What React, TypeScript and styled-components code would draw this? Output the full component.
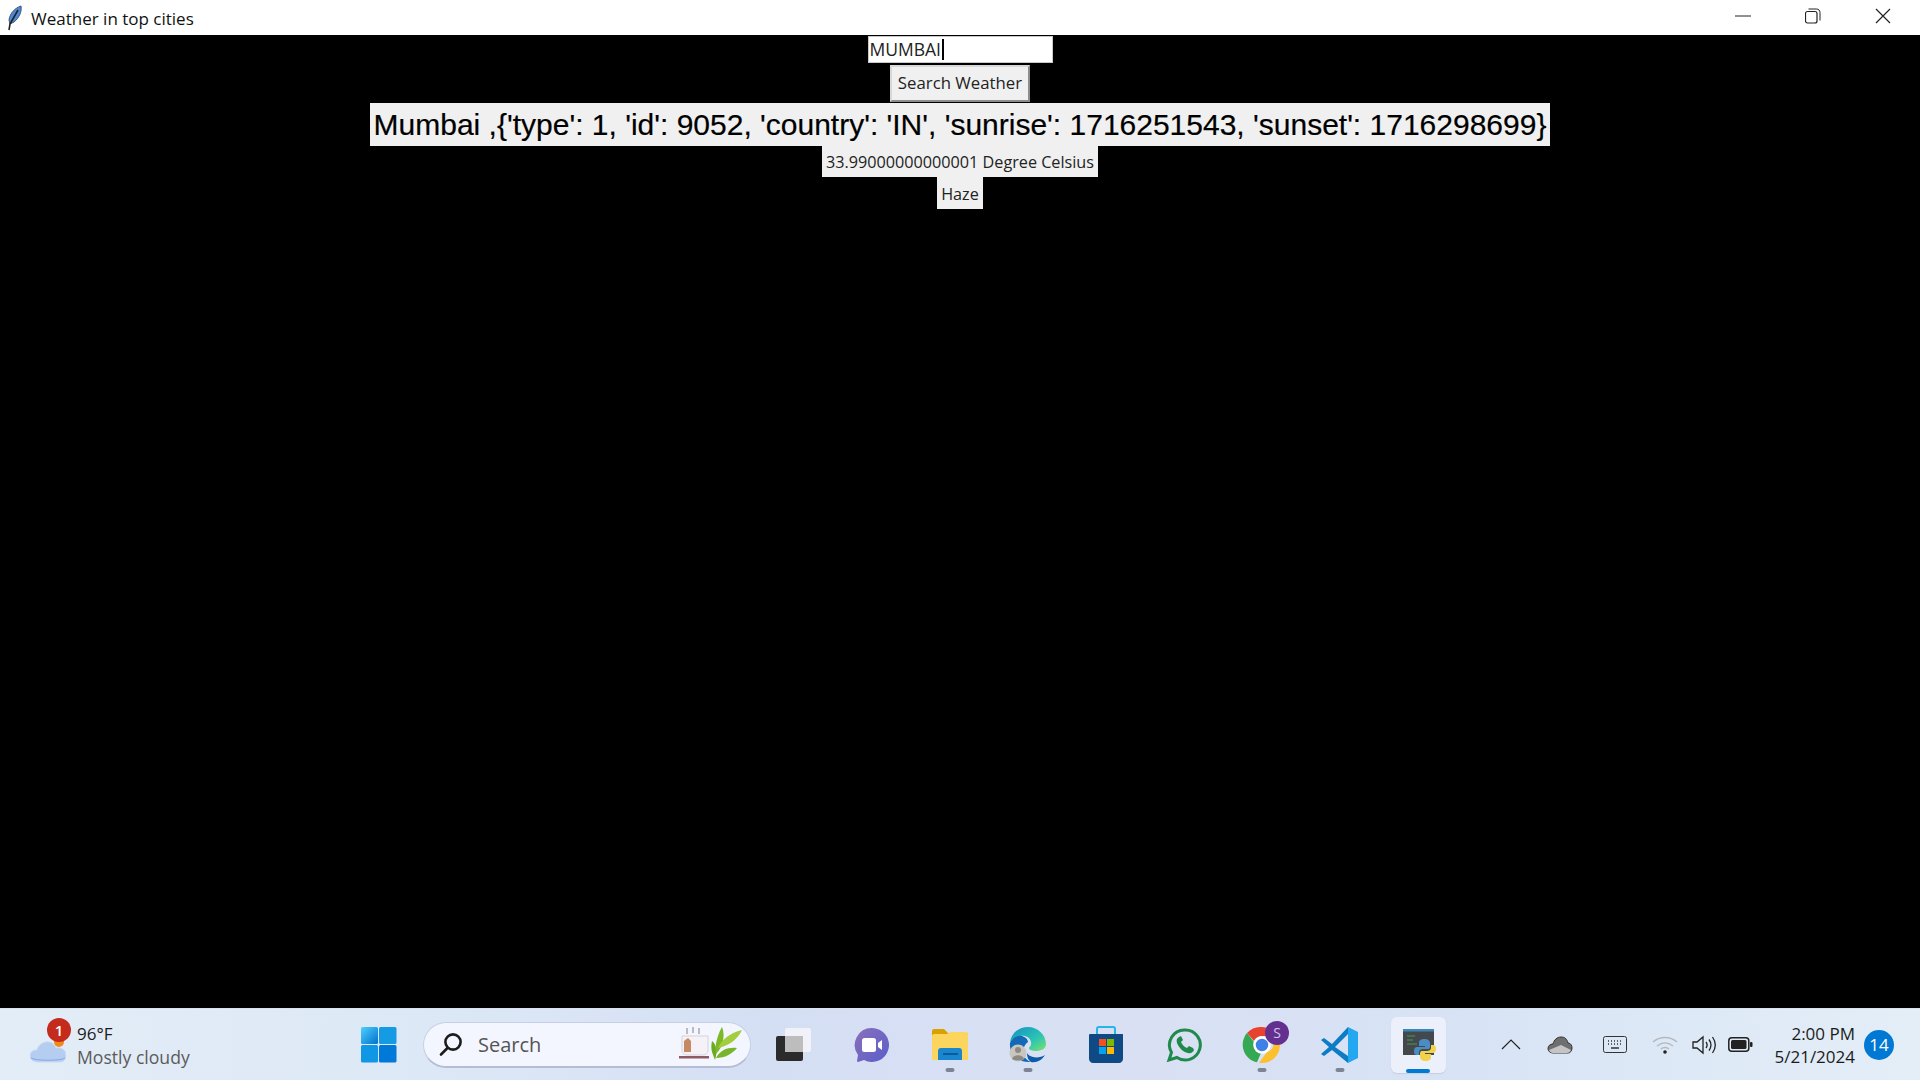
import styled, { createGlobalStyle } from "styled-components";

const GlobalStyle = createGlobalStyle`
    html, body {
        margin: 0;
        padding: 0;
        background: #000;
    }
    body {
        font-family: "Open Sans", "Noto Sans", sans-serif;
    }
`;

const Desktop = styled.div`
    width: 1920px;
    height: 1080px;
    display: flex;
    flex-direction: column;
    overflow: hidden;
`;

/* title bar */
const TitleBar = styled.header`
    height: 35px;
    flex: none;
    display: flex;
    align-items: center;
    background: #fff;
    padding-left: 6px;
`;
const TitleText = styled.span`
    margin-left: 8px;
    padding-top: 2px;
    font-size: 17px;
    color: #111;
`;
const WindowButtons = styled.div`
    margin-left: auto;
    display: flex;
    padding-right: 2px;
`;
const WindowButton = styled.div`
    width: 70px;
    height: 35px;
    display: flex;
    align-items: center;
    justify-content: center;
    padding-bottom: 3px;
    box-sizing: border-box;
`;

/* tkinter window */
const Client = styled.main`
    flex: 1;
    background: #000;
    display: flex;
    flex-direction: column;
    align-items: center;
    padding-top: 1px;
`;
const Entry = styled.div`
    width: 185px;
    height: 27px;
    box-sizing: border-box;
    background: #fff;
    border: 1px solid #c8c8c8;
    padding-left: 1px;
    font-size: 17.5px;
    line-height: 25px;
    color: #222;
    display: flex;
    align-items: center;
`;
const Caret = styled.span`
    width: 2px;
    height: 21px;
    margin-left: 1px;
    background: #000;
`;
const SearchButton = styled.div`
    width: 140px;
    height: 37px;
    margin: 2px 0 1px;
    padding-bottom: 2px;
    box-sizing: border-box;
    background: #f0f0f0;
    border: 2px solid #d8d8d8;
    border-right-color: #8c8c8c;
    border-bottom-color: #8c8c8c;
    font-size: 16.8px;
    color: #222;
    display: flex;
    align-items: center;
    justify-content: center;
`;
const BigLabel = styled.div`
    background: #f0f0f0;
    color: #000;
    font-family: "Liberation Sans", Arial, sans-serif;
    font-size: 30px;
    -webkit-text-stroke: 0.2px #000;
    height: 43px;
    padding: 0 4px;
    display: flex;
    align-items: center;
    white-space: nowrap;
`;
const Label = styled.div<{ $h: number }>`
    background: #f0f0f0;
    color: #222;
    font-size: 16.2px;
    height: ${(p) => p.$h}px;
    padding: 0 4px;
    display: flex;
    align-items: center;
    white-space: nowrap;
`;
const HazeLabel = styled(Label)`
    padding-top: 2px;
    box-sizing: border-box;
`;

/* taskbar */
const Taskbar = styled.footer`
    height: 72px;
    flex: none;
    display: flex;
    align-items: center;
    background: linear-gradient(90deg, #e3edf7 0%, #dde8f6 22%, #d5dff4 40%, #d9e0f3 60%, #d7e3f5 75%, #e3eef7 100%);
    border-top: 1px solid #d8e2ee;
    box-sizing: border-box;
`;
const WeatherWidget = styled.div`
    width: 340px;
    flex: none;
    display: flex;
    align-items: center;
    padding-left: 30px;
    box-sizing: border-box;
    position: relative;
`;
const WeatherBadge = styled.span`
    position: absolute;
    left: 47px;
    top: -2px;
    width: 24px;
    height: 24px;
    border-radius: 50%;
    background: #c42b1c;
    color: #fff;
    font-size: 15px;
    font-weight: 600;
    display: flex;
    align-items: center;
    justify-content: center;
`;
const WeatherText = styled.div`
    margin-left: 11px;
    padding-top: 2px;
    display: flex;
    flex-direction: column;
    gap: 1px;
`;
const WeatherTemp = styled.span`
    font-size: 17px;
    line-height: 23px;
    color: #1b1b1b;
`;
const WeatherSub = styled.span`
    font-size: 17.6px;
    line-height: 23px;
    color: #5b5b5b;
`;
const Slot = styled.div<{ $active?: boolean }>`
    width: 78px;
    height: 56px;
    flex: none;
    display: flex;
    align-items: center;
    justify-content: center;
    position: relative;
    &::before {
        content: "";
        display: ${(p) => (p.$active ? "block" : "none")};
        position: absolute;
        left: 12px;
        right: 11px;
        top: 0;
        bottom: 0;
        border-radius: 6px;
        background: #ebf0fa;
        box-shadow: 0 1px 1px #c5cede;
    }
    & > svg {
        position: relative;
    }
`;
const RunDot = styled.span<{ $active?: boolean }>`
    position: absolute;
    left: 50%;
    bottom: ${(p) => (p.$active ? "0" : "1px")};
    width: ${(p) => (p.$active ? "24px" : "9px")};
    height: 4px;
    transform: translateX(-50%);
    border-radius: 2px;
    background: ${(p) => (p.$active ? "#0078d4" : "#7d8595")};
`;
const SearchPill = styled.div`
    width: 328px;
    height: 46px;
    flex: none;
    margin: 0 4px 0 5px;
    box-sizing: border-box;
    border-radius: 23px;
    background: #f3f6fe;
    border: 1px solid #c6d0e4;
    border-bottom: 2px solid #b4bdd3;
    display: flex;
    align-items: center;
    padding: 0 3px 0 15px;
`;
const SearchText = styled.span`
    margin-left: 15px;
    font-size: 20px;
    color: #555;
`;
const SearchArt = styled.div`
    margin-left: auto;
    display: flex;
`;
const Tray = styled.div`
    margin-left: auto;
    display: flex;
    align-items: center;
    padding-right: 26px;
`;
const TrayIcon = styled.div<{ $w: number }>`
    width: ${(p) => p.$w}px;
    display: flex;
    align-items: center;
    justify-content: center;
`;
const Clock = styled.div`
    width: 97px;
    text-align: right;
    font-size: 17px;
    line-height: 23px;
    color: #1b1b1b;
    white-space: nowrap;
`;
const CountBadge = styled.div`
    width: 30px;
    height: 30px;
    margin-left: 9px;
    border-radius: 50%;
    background: #0078d4;
    color: #fff;
    font-size: 17px;
    display: flex;
    align-items: center;
    justify-content: center;
`;

const Feather = () => (
    <svg width="17" height="26" viewBox="0 0 17 26">
        <path d="M15 1C9 3 4 8 3 15l1 4 4-2c5-4 8-10 7-16z" fill="#5088d6" stroke="#3c5878" strokeWidth="1" />
        <path d="M12 5L4 19 3 25" fill="none" stroke="#222" strokeWidth="1.6" />
    </svg>
);

const CloudWeather = () => (
    <svg width="36" height="36" viewBox="0 0 36 36">
        <circle cx="29" cy="15" r="5" fill="#f08a1d" />
        <path d="M8 35C3 35 0 32 0 28.500 0 25 3 23 7 23c1-5 7-9 12-8 4 .5 6 4 7 6 5-1 10 2 10 7 0 4-2 7-6 7z" fill="#b4cdf0" stroke="#c9dbf4" />
        <path d="M1 31c4 3 30 3 34 0" fill="none" stroke="#86aadc" strokeWidth="1" />
    </svg>
);

const WindowsLogo = () => (
    <svg width="36" height="36" viewBox="0 0 36 36">
        <defs>
            <linearGradient id="win" x1="0" y1="0" x2="1" y2="1">
                <stop offset="0" stopColor="#4fd0fb" />
                <stop offset="1" stopColor="#0072cf" />
            </linearGradient>
        </defs>
        <rect width="17" height="17" rx="1.5" fill="url(#win)" />
        <rect x="18" width="17.5" height="17" rx="1.5" fill="#149be3" />
        <rect y="18" width="17" height="17.5" rx="1.5" fill="#0f96e4" />
        <rect x="18" y="18" width="17.5" height="17.5" rx="1.5" fill="#0079d8" />
    </svg>
);

const SearchGlass = () => (
    <svg width="24" height="25" viewBox="0 0 24 25" fill="none" stroke="#1c1c1c" strokeWidth="2.6" strokeLinecap="round">
        <circle cx="14" cy="10" r="7.6" />
        <path d="M8.5 16L2 22.5" />
    </svg>
);

const TeaArt = () => (
    <svg width="68" height="36" viewBox="0 0 68 36">
        <path d="M8 2v6M14 1v6M20 2v6" stroke="#a4a4a4" strokeWidth="1.4" fill="none" />
        <path d="M3 10h26v14c0 4-3 5-6 5H9c-3 0-6-1-6-5z" fill="#f4f2f6" stroke="#d6d2dc" />
        <path d="M5 15l4-3 3 3v11H5z" fill="#c58a63" />
        <rect y="30" width="30" height="2.500" fill="#8e5a64" />
        <path d="M36 34C34 28 31 24 33 15c4 3 6 10 3 19z" fill="#6bab1e" />
        <path d="M37 28C35 20 39 8 43 1c3 7 2 19-6 27z" fill="#7cb828" />
        <path d="M39 22c4-9 12-15 24-18-4 9-13 16-24 18z" fill="#a2cd3c" />
        <path d="M37 32c4-8 12-11 21-10-5 6-12 10-21 10z" fill="#79b52a" />
    </svg>
);

const TaskView = () => (
    <svg width="36" height="36" viewBox="0 0 36 36">
        <rect x="0" y="9" width="27" height="25" rx="2" fill="#2b2b2b" />
        <rect x="9" y="1" width="26" height="24" rx="2" fill="#f7f7f8" opacity="0.82" />
        <rect x="9" y="9" width="18" height="16" fill="#bdbdbd" />
    </svg>
);

const MeetIcon = () => (
    <svg width="36" height="36" viewBox="0 0 36 36">
        <defs>
            <linearGradient id="meet" x1="0" y1="0" x2="1" y2="1">
                <stop offset="0" stopColor="#8a6fbb" />
                <stop offset="1" stopColor="#5a5fca" />
            </linearGradient>
        </defs>
        <path d="M18 1a17 17 0 1 1-8 32l-6 2c-1 0-1-1-1-1l1-6A17 17 0 0 1 18 1z" fill="url(#meet)" />
        <rect x="8" y="11" width="14" height="14" rx="2.5" fill="#fff" />
        <path d="M24 16l4-3v10l-4-3z" fill="#fff" />
    </svg>
);

const FolderIcon = () => (
    <svg width="36" height="34" viewBox="0 0 36 34">
        <path d="M0 3c0-1 1-2 2-2h10l4 4h20v5H0z" fill="#d9a100" />
        <path d="M0 8c0-1 1-2 2-2h13l3-2h16c1 0 2 1 2 2v26H0z" fill="#fcd55f" />
        <path d="M6 32v-9c0-2 1-3 3-3h18c2 0 3 1 3 3v9z" fill="#1a86d0" />
        <rect x="11" y="25" width="15" height="2" fill="#0d5b9b" />
    </svg>
);

const EdgeIcon = () => (
    <svg width="38" height="38" viewBox="0 0 38 38">
        <defs>
            <linearGradient id="edge" x1="0" y1="0" x2="1" y2="1">
                <stop offset="0" stopColor="#1291c4" />
                <stop offset="0.6" stopColor="#2cc4b4" />
                <stop offset="1" stopColor="#7ee36a" />
            </linearGradient>
        </defs>
        <path d="M1 17C2 7 10 1 19 1c10 0 18 8 18 17 0 5-5 7-10 7-4 0-7-1-7-3 0-1 3-2 2-6-1-5-6-7-11-6C6 11 2 14 1 17z" fill="url(#edge)" />
        <path d="M1 17c2-5 7-8 12-7 3 1 6 3 6 6-3 2-5 6-5 10 0 4 3 8 8 10C10 37 0 29 1 17z" fill="#1369b5" />
        <path d="M22 36c6 1 11-2 14-7-3 2-8 3-12 2-3-1-5-2-6-4 0 4 1 7 4 9z" fill="#0f5aa6" />
        <circle cx="9" cy="27" r="8.5" fill="#c9c6c0" />
        <circle cx="9" cy="24" r="3" fill="#8d8a85" />
        <path d="M3 33c1-5 11-5 12 0-3 2-9 2-12 0z" fill="#8d8a85" />
    </svg>
);

const StoreIcon = () => (
    <svg width="36" height="38" viewBox="0 0 36 38">
        <path d="M9 8V3c0-1 1-2 2-2h14c1 0 2 1 2 2v5" fill="none" stroke="#27b4e8" strokeWidth="2" />
        <path d="M1 9c0-1 1-1 1-1h32c1 0 1 0 1 1v24c0 2-2 4-4 4H5c-2 0-4-2-4-4z" fill="#0f4a85" />
        <rect x="11" y="13" width="7" height="7" fill="#f25022" />
        <rect x="19" y="13" width="7" height="7" fill="#7fba00" />
        <rect x="11" y="21" width="7" height="7" fill="#00a4ef" />
        <rect x="19" y="21" width="7" height="7" fill="#ffb900" />
    </svg>
);

const WhatsAppIcon = () => (
    <svg width="36" height="36" viewBox="0 0 36 36">
        <path d="M19 3a15 15 0 1 1-8 27.5L3 33l2.5-7.5A15 15 0 0 1 19 3z" fill="none" stroke="#1f8a4c" strokeWidth="3" />
        <path d="M13 10c-2 1-3 3-2 6 2 5 6 9 11 10 3 1 5-1 6-3l-1-2-4-2-2 2c-3-1-5-4-6-6l2-2-2-4z" fill="#1f8a4c" />
    </svg>
);

const ChromeIcon = () => (
    <svg width="60" height="50" viewBox="0 0 60 50">
        <g transform="translate(12 7)">
            <path d="M18 0a18 18 0 0 1 15.6 9H18a9 9 0 0 0-8 5L3 6A18 18 0 0 1 18 0z" fill="#e8432f" />
            <path d="M3 6l7 9a9 9 0 0 0 7 11l-4 9.300A18 18 0 0 1 3 6z" fill="#34a853" />
            <path d="M33.600 9A18 18 0 0 1 15 35.800L23 25a9 9 0 0 0 3-16z" fill="#fbc02d" />
            <circle cx="18" cy="18" r="7.500" fill="#3f7fe8" stroke="#fff" strokeWidth="2.500" />
        </g>
        <circle cx="45" cy="13" r="12" fill="#63308f" />
        <text x="45" y="18" textAnchor="middle" fontSize="14" fontFamily="Open Sans, sans-serif" fill="#d6c2e8">S</text>
    </svg>
);

const VsCodeIcon = () => (
    <svg width="38" height="38" viewBox="0 0 38 38">
        <path d="M27 1l10 5v26l-10 5z" fill="#22a7f0" />
        <path d="M27 1L11 18 3 12l-3 2 8 7-8 7 3 2 8-6 16 13v-7L14 21 27 8z" fill="#0d7cc4" />
    </svg>
);

const PythonTerminalIcon = () => (
    <svg width="36" height="38" viewBox="0 0 36 38">
        <rect x="3" y="3" width="31" height="26" fill="#44484c" />
        <rect x="3" y="3" width="31" height="2.500" fill="#3d87b8" />
        <path d="M7 10h8M7 14h6M7 18h10" stroke="#3fa04f" strokeWidth="1.200" />
        <g transform="translate(14 13)">
            <path d="M11 0C6 0 5 2 5 4v3h6v1H3C1 8 0 10 0 12c0 3 1 4 3 4h2v-3c0-2 2-3 4-3h5c2 0 2-2 2-3V4c0-2-2-4-5-4z" fill="#4a8cc4" />
            <path d="M11 0C6 0 5 2 5 4v3h6v1H3C1 8 0 10 0 12c0 3 1 4 3 4h2v-3c0-2 2-3 4-3h5c2 0 2-2 2-3V4c0-2-2-4-5-4z" fill="#f2d24a" transform="rotate(180 11 11)" />
        </g>
    </svg>
);

const CloudTray = () => (
    <svg width="26" height="18" viewBox="0 0 26 18">
        <path d="M6 17c-3 0-5-2-5-4.500S3 8 6 8c1-4 4-7 8-7s6 2 7 6c3 0 4 3 4 5 0 3-2 5-4 5z" fill="#6f6f6f" stroke="#333" strokeWidth="1" />
        <path d="M2 14l12-5 10 5c-1 2-2 3-4 3H6c-2 0-3-1-4-3z" fill="#c4c4c4" />
    </svg>
);

const KeyboardTray = () => (
    <svg width="24" height="17" viewBox="0 0 24 17" fill="none">
        <rect x="0.500" y="0.500" width="23" height="16" rx="2" stroke="#333" />
        <path d="M5 5h1M8 5h1M11 5h1M14 5h1M17 5h1M5 8h1M8 8h1M11 8h1M14 8h1M17 8h1M8 12h8" stroke="#333" strokeWidth="1.400" />
    </svg>
);

const WifiTray = () => (
    <svg width="26" height="20" viewBox="0 0 26 20" fill="none" stroke="#b4b8be" strokeWidth="1.300">
        <path d="M1 7c7-6 17-6 24 0M5 11c5-4 11-4 16 0M9 14c2-2 6-2 8 0" />
        <circle cx="13" cy="17" r="1.800" fill="#222" stroke="none" />
    </svg>
);

const SpeakerTray = () => (
    <svg width="25" height="20" viewBox="0 0 25 20" fill="none" stroke="#222" strokeWidth="1.300">
        <path d="M1 7v6h4l6 5V2L5 7z" />
        <path d="M14 7c1.500 2 1.500 4 0 6M17 4.500c2.500 3.500 2.500 7.500 0 11M20.500 2c3.500 5 3.500 11 0 16" />
    </svg>
);

const BatteryTray = () => (
    <svg width="25" height="15" viewBox="0 0 25 15">
        <rect x="0.800" y="0.800" width="20" height="13.400" rx="3" fill="none" stroke="#222" strokeWidth="1.500" />
        <rect x="3" y="3" width="15.500" height="9" rx="1.500" fill="#222" />
        <rect x="22" y="5" width="2.500" height="5" rx="1" fill="#222" />
    </svg>
);

const App = () => {
    return (
        <Desktop>
            <GlobalStyle />
            <TitleBar>
                <Feather />
                <TitleText>Weather in top cities</TitleText>
                <WindowButtons>
                    <WindowButton>
                        <svg width="16" height="2" viewBox="0 0 16 2"><path d="M0 1h16" stroke="#222" /></svg>
                    </WindowButton>
                    <WindowButton>
                        <svg width="16" height="16" viewBox="0 0 16 16" fill="none" stroke="#222">
                            <rect x="0.500" y="3.500" width="11.500" height="11.500" rx="2" strokeWidth="1.200" />
                            <path d="M3.500 1h8c2 0 3.500 1.500 3.500 3.500v8" />
                        </svg>
                    </WindowButton>
                    <WindowButton>
                        <svg width="16" height="16" viewBox="0 0 16 16"><path d="M1 1l14 14M15 1L1 15" stroke="#222" strokeWidth="1.200" /></svg>
                    </WindowButton>
                </WindowButtons>
            </TitleBar>
            <Client>
                <Entry>MUMBAI<Caret /></Entry>
                <SearchButton>Search Weather</SearchButton>
                <BigLabel>Mumbai ,{"{"}'type': 1, 'id': 9052, 'country': 'IN', 'sunrise': 1716251543, 'sunset': 1716298699{"}"}</BigLabel>
                <Label $h={31}>33.99000000000001 Degree Celsius</Label>
                <HazeLabel $h={32}>Haze</HazeLabel>
            </Client>
            <Taskbar>
                <WeatherWidget>
                    <CloudWeather />
                    <WeatherBadge>1</WeatherBadge>
                    <WeatherText>
                        <WeatherTemp>96°F</WeatherTemp>
                        <WeatherSub>Mostly cloudy</WeatherSub>
                    </WeatherText>
                </WeatherWidget>
                <Slot><WindowsLogo /></Slot>
                <SearchPill>
                    <SearchGlass />
                    <SearchText>Search</SearchText>
                    <SearchArt><TeaArt /></SearchArt>
                </SearchPill>
                <Slot><TaskView /></Slot>
                <Slot><MeetIcon /></Slot>
                <Slot><FolderIcon /><RunDot /></Slot>
                <Slot><EdgeIcon /><RunDot /></Slot>
                <Slot><StoreIcon /></Slot>
                <Slot><WhatsAppIcon /></Slot>
                <Slot><ChromeIcon /><RunDot /></Slot>
                <Slot><VsCodeIcon /><RunDot /></Slot>
                <Slot $active><PythonTerminalIcon /><RunDot $active /></Slot>
                <Tray>
                    <TrayIcon $w={42}>
                        <svg width="20" height="11" viewBox="0 0 20 11"><path d="M1 10l9-9 9 9" fill="none" stroke="#222" strokeWidth="1.200" /></svg>
                    </TrayIcon>
                    <TrayIcon $w={55}><CloudTray /></TrayIcon>
                    <TrayIcon $w={56}><KeyboardTray /></TrayIcon>
                    <TrayIcon $w={43}><WifiTray /></TrayIcon>
                    <TrayIcon $w={36}><SpeakerTray /></TrayIcon>
                    <TrayIcon $w={36}><BatteryTray /></TrayIcon>
                    <Clock>2:00 PM<br />5/21/2024</Clock>
                    <CountBadge>14</CountBadge>
                </Tray>
            </Taskbar>
        </Desktop>
    );
};

export default App;
